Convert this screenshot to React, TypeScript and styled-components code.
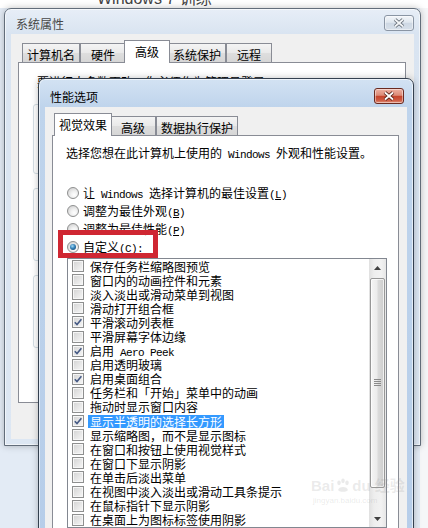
import React from "react";
import styled, { createGlobalStyle, css } from "styled-components";

const GlobalStyle = createGlobalStyle`
  html, body { margin: 0; padding: 0; }
  body {
    font-family: "Noto Sans CJK SC", "Noto Sans", sans-serif;
    font-size: 12px;
    color: #000;
    background: #fff;
  }
  * { box-sizing: border-box; }
`;

const Desktop = styled.div`
  position: relative;
  width: 428px;
  height: 528px;
  overflow: hidden;
  background: linear-gradient(to right, #e3ebf5 0, #e3ebf5 420px, #f5f6f8 420px);
`;

const Heading = styled.div`
  height: 8px;
  overflow: hidden;
  background: #fff;
  padding-left: 97px;
`;

const HeadingText = styled.div`
  margin-top: -9px;
  font-family: "Liberation Sans", "Noto Sans CJK SC", sans-serif;
  font-size: 16px;
  line-height: 16px;
  color: #444;
`;

// windows sit on the desktop at their own spots
const Win = styled.div<{ $x: number; $y: number; $w: number; $h: number; $active?: boolean }>`
  position: absolute;
  left: ${(p) => p.$x}px;
  top: ${(p) => p.$y}px;
  width: ${(p) => p.$w}px;
  height: ${(p) => p.$h}px;
  display: flex;
  flex-direction: column;
  padding: 0 6px 6px 6px;
  border: 1px solid ${(p) => (p.$active ? "#34404f" : "#626d7a")};
  border-radius: 7px 7px 0 0;
  background: ${(p) =>
    p.$active
      ? "linear-gradient(to bottom, #d3e2f3 0, #bfd4ec 28px, #b6cde9 100%)"
      : "linear-gradient(to bottom, #e7eef7 0, #d9e4f1 25px, #dde7f3 100%)"};
  box-shadow: inset 0 0 0 1px rgba(255, 255, 255, 0.6), 0 0 7px rgba(0, 0, 0, 0.25);
`;

const TitleBar = styled.div<{ $active?: boolean }>`
  flex: none;
  height: ${(p) => (p.$active ? 28 : 25)}px;
  display: flex;
  align-items: flex-start;
  padding-left: 5px;
`;

const Title = styled.div<{ $active?: boolean }>`
  margin-top: ${(p) => (p.$active ? 8 : 5)}px;
  line-height: 20px;
  color: ${(p) => (p.$active ? "#000" : "#474747")};
`;

const CloseBtn = styled.div<{ $active?: boolean }>`
  margin-left: auto;
  margin-top: ${(p) => (p.$active ? 9 : 6)}px;
  margin-right: ${(p) => (p.$active ? 3 : 0)}px;
  width: 30px;
  height: 16px;
  border-radius: 3px;
  display: flex;
  align-items: center;
  justify-content: center;
  border: 1px solid ${(p) => (p.$active ? "#6a2a20" : "#8a95a4")};
  background: ${(p) =>
    p.$active
      ? "linear-gradient(to bottom, #eeb0a2 0, #dc8b77 45%, #c6442c 52%, #cd5a42 80%, #e0907a 100%)"
      : "linear-gradient(to bottom, #f3f6fa 0, #e0e7ef 45%, #ced8e4 52%, #d8e0ea 100%)"};
  box-shadow: inset 0 0 0 1px rgba(255, 255, 255, 0.45);
`;

const Body = styled.div`
  flex: 1;
  min-height: 0;
  display: flex;
  flex-direction: column;
  background: #f0f0f0;
  padding: 6px 8px 0 7px;
`;

const TabRow = styled.div`
  position: relative;
  z-index: 1;
  flex: none;
  height: 22px;
  display: flex;
  align-items: flex-end;
  padding-left: 4px;
`;

const Tab = styled.div<{ $on?: boolean }>`
  position: relative;
  min-width: 46px;
  padding: 0 4px;
  display: flex;
  align-items: center;
  justify-content: center;
  white-space: nowrap;
  border: 1px solid #898c95;
  border-bottom: none;
  ${(p) =>
    p.$on
      ? css`
          z-index: 1;
          height: 23px;
          margin: 0 -2px -1px;
          padding-bottom: 2px;
          background: #fff;
        `
      : css`
          height: 19px;
          padding-top: 2px;
          background: linear-gradient(to bottom, #f4f4f4, #e9e9e9 50%, #dedede 51%, #d6d6d6);
        `}
`;

const Panel = styled.div<{ $h?: number }>`
  display: flex;
  flex-direction: column;
  background: #fff;
  border: 1px solid #898c95;
  ${(p) => (p.$h ? `flex: none; height: ${p.$h}px;` : "flex: 1;")}
`;

const Notice = styled.div`
  margin: 11px 0 0 18px;
  line-height: 16px;
  white-space: nowrap;
`;

const GroupBox = styled.div<{ $h: number }>`
  flex: none;
  height: ${(p) => p.$h}px;
  margin: 14px 14px 0;
  border: 1px solid #d5dfe5;
  border-radius: 3px;
`;

const Desc = styled.div`
  margin: 9px 0 0 13px;
  line-height: 16px;
  white-space: nowrap;
`;

const Lat = styled.span`
  font-family: "Liberation Mono", "DejaVu Sans Mono", monospace;
  font-size: 11px;
  letter-spacing: -0.6px;
  white-space: pre;
`;

const RadioList = styled.div`
  display: flex;
  flex-direction: column;
  margin: 21px 0 0 14px;
`;

const RadioRow = styled.div`
  height: 18px;
  display: flex;
  align-items: center;
  gap: 4px;
  white-space: nowrap;
`;

const RadioLabel = styled.span`
  display: inline-block;
  height: 16px;
  line-height: 16px;
`;

const Radio = styled.span<{ $on?: boolean }>`
  position: relative;
  flex: none;
  width: 12px;
  height: 12px;
  border-radius: 50%;
  border: 1px solid #8e8f8f;
  background: radial-gradient(circle at 62% 68%, #ffffff 0, #f1f1f1 35%, #d6d6d6 78%, #cacaca 100%);
  ${(p) =>
    p.$on &&
    css`
      &::after {
        content: "";
        position: absolute;
        left: 2px;
        top: 2px;
        width: 6px;
        height: 6px;
        border-radius: 50%;
        background: radial-gradient(circle at 40% 35%, #a5dcf7 0, #3380b8 45%, #0f3657 100%);
      }
    `}
`;

const ListBox = styled.div`
  flex: none;
  width: 320px;
  height: 270px;
  margin: 2px 0 0 14px;
  border: 1px solid #828790;
  display: flex;
  background: #fff;
`;

const Items = styled.div`
  flex: 1;
  overflow: hidden;
  display: flex;
  flex-direction: column;
`;

const Item = styled.div`
  flex: none;
  height: 14.1px;
  display: flex;
  align-items: center;
  gap: 6px;
  padding-left: 4px;
  white-space: nowrap;
`;

const Check = styled.span`
  flex: none;
  width: 12px;
  height: 12px;
  display: flex;
  align-items: center;
  justify-content: center;
  border: 1px solid #8e8f8f;
  box-shadow: inset 0 0 0 1px #f6f6f6;
  background: linear-gradient(135deg, #d3d3d3, #f7f7f7);
`;

const ItemText = styled.span<{ $sel?: boolean }>`
  display: inline-block;
  height: 13px;
  line-height: 13px;
  ${(p) =>
    p.$sel &&
    css`
      margin-left: -2px;
      padding: 0 2px;
      background: #3399ff;
      color: #fff;
    `}
`;

const ScrollBar = styled.div`
  flex: none;
  width: 17px;
  display: flex;
  flex-direction: column;
  background: linear-gradient(to right, #e0e0e0, #eeeeee 30%, #f2f2f2 70%, #e7e7e7);
`;

const ArrowBtn = styled.div`
  flex: none;
  height: 17px;
  display: flex;
  align-items: center;
  justify-content: center;
`;

const Thumb = styled.div`
  flex: none;
  height: 210px;
  margin: 2px 1px 0;
  display: flex;
  align-items: center;
  justify-content: center;
  border: 1px solid #979797;
  border-radius: 2px;
  background: linear-gradient(to right, #f5f5f5, #ececec 45%, #dbdbdb 55%, #cdcdcd);
  box-shadow: inset 0 0 0 1px rgba(255, 255, 255, 0.7);
`;

const Track = styled.div`
  flex: 1;
`;

const Callout = styled.div`
  position: absolute;
  left: 58px;
  top: 230px;
  width: 100px;
  height: 28px;
  border: 5px solid #cf2732;
`;

const Watermark = styled.div`
  position: absolute;
  left: 311px;
  top: 476px;
  display: flex;
  flex-direction: column;
  color: rgba(150, 150, 150, 0.2);
  font-family: "Liberation Sans", "Noto Sans CJK SC", sans-serif;
`;

const MarkLine = styled.div`
  display: flex;
  align-items: center;
  gap: 1px;
  font-size: 15px;
  font-weight: bold;
  line-height: 20px;
  white-space: nowrap;
`;

const MarkSmall = styled.div`
  font-size: 8px;
  line-height: 10px;
  padding-left: 2px;
  white-space: nowrap;
`;

const CloseGlyph = ({ active }: { active?: boolean }) => (
  <svg width="12" height="10" viewBox="0 0 12 10">
    <path d="M2 1.5 L10 8.5 M10 1.5 L2 8.5" stroke={active ? "#4b1a12" : "#5f6873"} strokeWidth="3.6" />
    <path d="M2 1.5 L10 8.5 M10 1.5 L2 8.5" stroke={active ? "#fff" : "#f4f6f8"} strokeWidth="1.8" />
  </svg>
);

const CheckMark = () => (
  <svg width="10" height="10" viewBox="0 0 10 10">
    <path d="M1.8 5.2 L4 7.6 L8.4 2.2" fill="none" stroke="#465a85" strokeWidth="1.6" />
  </svg>
);

const Arrow = ({ down }: { down?: boolean }) => (
  <svg width="7" height="4" viewBox="0 0 7 4">
    <path d={down ? "M0 0 L7 0 L3.5 4 Z" : "M0 4 L7 4 L3.5 0 Z"} fill="#404040" />
  </svg>
);

const Gripper = () => (
  <svg width="7" height="8" viewBox="0 0 7 8">
    {[0.5, 2.5, 4.5, 6.5].map((y) => (
      <path key={y} d={`M0 ${y} H7`} stroke="#8a8a8a" strokeWidth="1" />
    ))}
  </svg>
);

const Paw = () => (
  <svg width="16" height="16" viewBox="0 0 20 20">
    <g fill="rgba(150,150,150,0.2)">
      <ellipse cx="5" cy="6" rx="2.2" ry="3" />
      <ellipse cx="10" cy="3.5" rx="2.2" ry="3" />
      <ellipse cx="15" cy="6" rx="2.2" ry="3" />
      <path d="M4 15 C4 10 16 10 16 15 C16 18 4 18 4 15 Z" />
    </g>
  </svg>
);

const effects: { label: React.ReactNode; on?: boolean; sel?: boolean }[] = [
  { label: "保存任务栏缩略图预览" },
  { label: "窗口内的动画控件和元素" },
  { label: "淡入淡出或滑动菜单到视图" },
  { label: "滑动打开组合框" },
  { label: "平滑滚动列表框", on: true },
  { label: "平滑屏幕字体边缘" },
  { label: <>启用<Lat> Aero Peek</Lat></>, on: true },
  { label: "启用透明玻璃" },
  { label: "启用桌面组合", on: true },
  { label: "任务栏和「开始」菜单中的动画" },
  { label: "拖动时显示窗口内容" },
  { label: "显示半透明的选择长方形", on: true, sel: true },
  { label: "显示缩略图，而不是显示图标" },
  { label: "在窗口和按钮上使用视觉样式" },
  { label: "在窗口下显示阴影" },
  { label: "在单击后淡出菜单" },
  { label: "在视图中淡入淡出或滑动工具条提示" },
  { label: "在鼠标指针下显示阴影" },
  { label: "在桌面上为图标标签使用阴影" },
];

const App = () => {
  return (
    <>
      <GlobalStyle />
      <Desktop>
        <Heading>
          <HeadingText>Windows 7 训练</HeadingText>
        </Heading>

        <Win $x={4} $y={8} $w={417} $h={438}>
          <TitleBar>
            <Title>系统属性</Title>
            <CloseBtn>
              <CloseGlyph />
            </CloseBtn>
          </TitleBar>
          <Body>
            <TabRow>
              <Tab>计算机名</Tab>
              <Tab>硬件</Tab>
              <Tab $on>高级</Tab>
              <Tab>系统保护</Tab>
              <Tab>远程</Tab>
            </TabRow>
            <Panel $h={341}>
              <Notice>要进行大多数更改，你必须作为管理员登录。</Notice>
              <GroupBox $h={70} />
              <GroupBox $h={73} />
              <GroupBox $h={73} />
            </Panel>
          </Body>
        </Win>

        <Win $x={38} $y={78} $w={376} $h={480} $active>
          <TitleBar $active>
            <Title $active>性能选项</Title>
            <CloseBtn $active>
              <CloseGlyph active />
            </CloseBtn>
          </TitleBar>
          <Body>
            <TabRow>
              <Tab $on>视觉效果</Tab>
              <Tab>高级</Tab>
              <Tab>数据执行保护</Tab>
            </TabRow>
            <Panel>
              <Desc>
                选择您想在此计算机上使用的<Lat> Windows </Lat>外观和性能设置。
              </Desc>
              <RadioList>
                <RadioRow>
                  <Radio />
                  <RadioLabel>
                    让<Lat> Windows </Lat>选择计算机的最佳设置<Lat>(<u>L</u>)</Lat>
                  </RadioLabel>
                </RadioRow>
                <RadioRow>
                  <Radio />
                  <RadioLabel>
                    调整为最佳外观<Lat>(<u>B</u>)</Lat>
                  </RadioLabel>
                </RadioRow>
                <RadioRow>
                  <Radio />
                  <RadioLabel>
                    调整为最佳性能<Lat>(<u>P</u>)</Lat>
                  </RadioLabel>
                </RadioRow>
                <RadioRow>
                  <Radio $on />
                  <RadioLabel>
                    自定义<Lat>(<u>C</u>):</Lat>
                  </RadioLabel>
                </RadioRow>
              </RadioList>
              <ListBox>
                <Items>
                  {effects.map((item, index) => (
                    <Item key={index}>
                      <Check>{item.on && <CheckMark />}</Check>
                      <ItemText $sel={item.sel}>{item.label}</ItemText>
                    </Item>
                  ))}
                </Items>
                <ScrollBar>
                  <ArrowBtn>
                    <Arrow />
                  </ArrowBtn>
                  <Thumb>
                    <Gripper />
                  </Thumb>
                  <Track />
                  <ArrowBtn>
                    <Arrow down />
                  </ArrowBtn>
                </ScrollBar>
              </ListBox>
            </Panel>
          </Body>
        </Win>

        <Callout />
        <Watermark>
          <MarkLine>
            Bai
            <Paw />
            du 经验
          </MarkLine>
          <MarkSmall>jingyan.baidu.com</MarkSmall>
        </Watermark>
      </Desktop>
    </>
  );
};

export default App;
